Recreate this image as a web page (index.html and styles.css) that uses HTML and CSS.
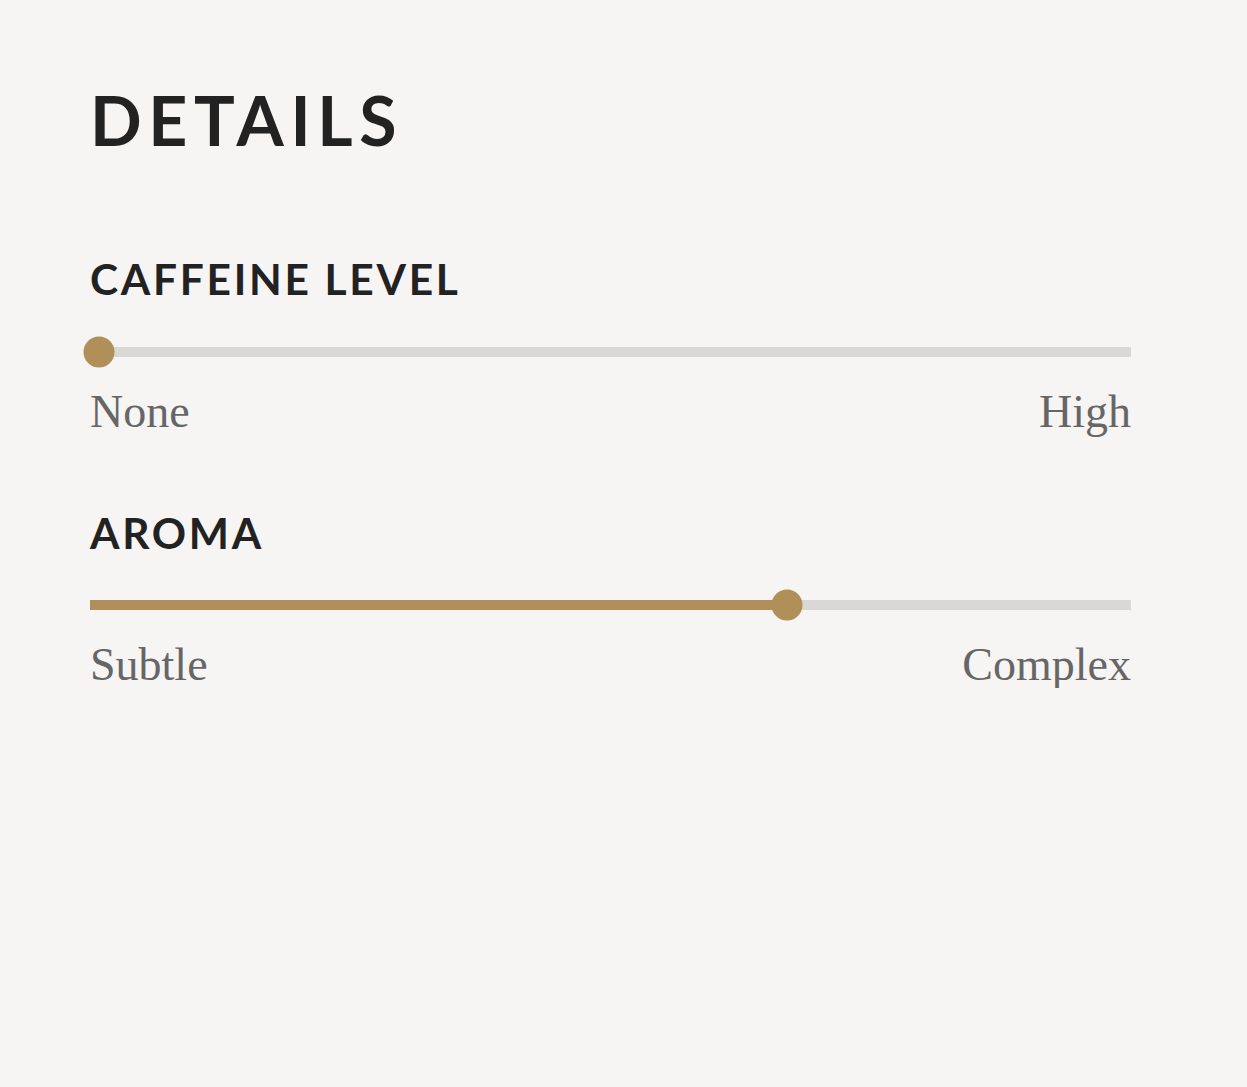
FILE: index.html
```html
<!DOCTYPE html>
<html lang="en">
<head>
    <meta charset="UTF-8">
    <meta name="viewport" content="width=device-width, initial-scale=1.0">
    <title>Details</title>
    <link rel="stylesheet" href="styles.css">
</head>
<body>
<div class="details">
    <h1>DETAILS</h1>

    <div class="metric">
        <h2>CAFFEINE LEVEL</h2>
        <div class="slider">
            <div class="fill" style="width: 0%"></div>
            <div class="knob" style="left: 0.9%"></div>
        </div>
        <div class="scale">
            <span>None</span>
            <span>High</span>
        </div>
    </div>

    <div class="metric">
        <h2>AROMA</h2>
        <div class="slider">
            <div class="fill" style="width: 67%"></div>
            <div class="knob" style="left: 67%"></div>
        </div>
        <div class="scale">
            <span>Subtle</span>
            <span>Complex</span>
        </div>
    </div>
</div>
</body>
</html>
```

FILE: styles.css
```css
body {
    margin: 0;
    background: #f6f5f3;
}

.details {
    width: 1041px;
    padding: 86px 0 0 90px;
}

h1 {
    margin: 0;
    font-family: Lato, "Liberation Sans", sans-serif;
    font-weight: 700;
    font-size: 68px;
    line-height: 1;
    letter-spacing: 6.6px;
    color: #222;
}

.metric {
    margin-top: 104px;
}

.metric + .metric {
    margin-top: 77px;
}

h2 {
    margin: 0;
    font-family: Lato, "Liberation Sans", sans-serif;
    font-weight: 700;
    font-size: 42.5px;
    line-height: 1;
    letter-spacing: 2.7px;
    color: #222;
}

.slider {
    position: relative;
    height: 10px;
    margin-top: 46px;
    background: #d9d8d6;
}

.fill {
    height: 100%;
    background: #b08f59;
}

.knob {
    position: absolute;
    top: 50%;
    width: 31px;
    height: 31px;
    border-radius: 50%;
    background: #b08f59;
    transform: translate(-50%, -50%);
}

.scale {
    display: flex;
    justify-content: space-between;
    margin-top: 32px;
    font-family: "Liberation Serif", serif;
    font-size: 46px;
    line-height: 1;
    color: #666;
}
```
